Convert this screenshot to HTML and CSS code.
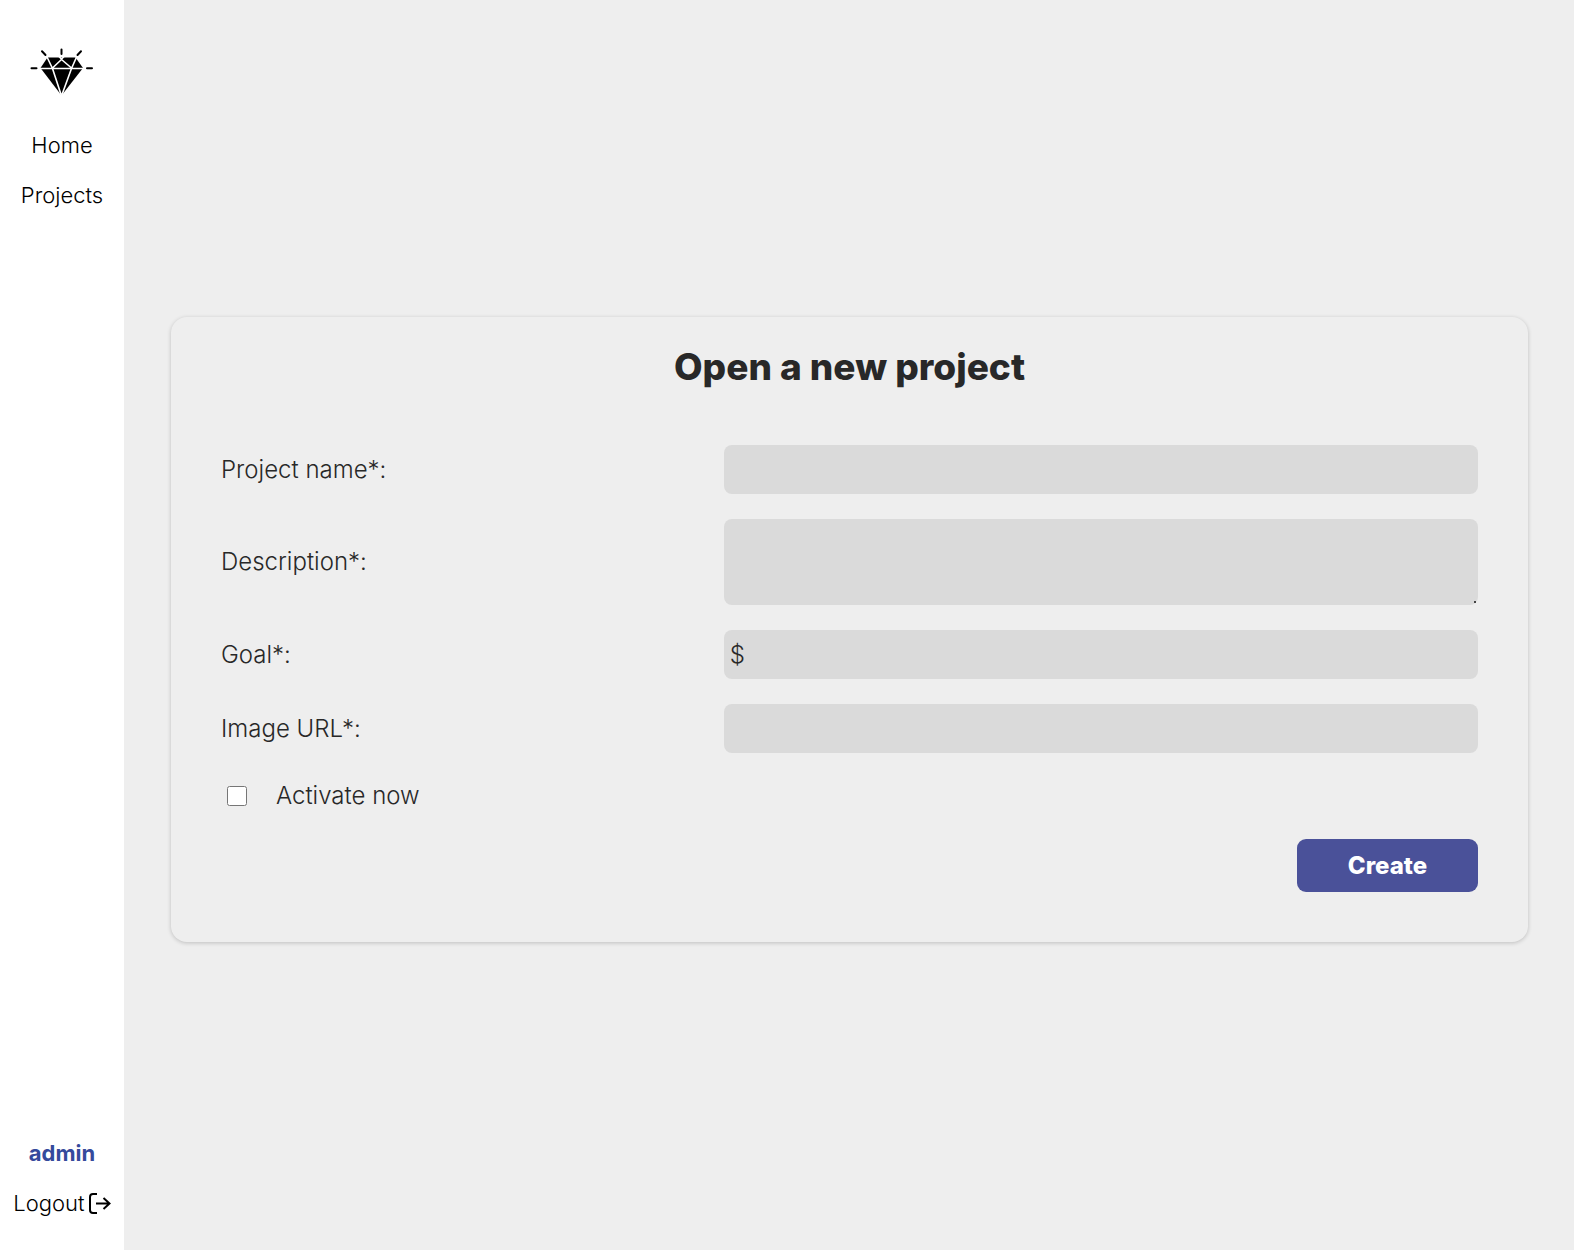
FILE: index.html
```html
<!DOCTYPE html>
<html lang="en">
<head>
  <meta charset="utf-8">
  <meta name="viewport" content="width=device-width, initial-scale=1">
  <title>Open a new project</title>
  <link rel="stylesheet" href="styles.css">
</head>
<body>
  <div class="layout">
    <nav class="sidebar">
      <a class="logo" href="#" aria-label="Start page">
        <svg width="64" height="48" viewBox="0 0 64 48" aria-hidden="true">
          <path d="M17.500 9.500H45.500L53 20L31.500 47.500L10.500 20Z" fill="#000"/>
          <path d="M9 20.500H55M16.500 8L22.500 20.500L31.500 48L41.500 20.500L47 8M22.500 20L31.500 11.500L41.500 20M29 8.500L31.500 11L34 8.500" fill="none" stroke="#fff" stroke-width="1.600"/>
          <path d="M1.500 20.300H6.500M57 20.300H62M31.500 1.500V6M12 3.200L15.500 7M51 3.200L47.500 7" fill="none" stroke="#000" stroke-width="2" stroke-linecap="round"/>
        </svg>
      </a>
      <a class="nav-link" href="#">Home</a>
      <a class="nav-link" href="#">Projects</a>
      <a class="nav-link account" href="#">admin</a>
      <a class="nav-link logout" href="#">
        Logout
        <svg width="22" height="22" viewBox="0 0 22 22" fill="none" stroke="#000" stroke-width="2" aria-hidden="true">
          <path d="M8 2H4Q1 2 1 5V18Q1 21 4 21H8M7 11.500H20M14.500 6L20.500 11.500L14.500 17"/>
        </svg>
      </a>
    </nav>
    <main class="content">
      <form class="card">
        <h1 class="title">Open a new project</h1>
        <div class="fields">
          <div class="row">
            <label for="name">Project name*:</label>
            <input class="field" id="name" type="text">
          </div>
          <div class="row">
            <label for="description">Description*:</label>
            <textarea class="field area" id="description"></textarea>
          </div>
          <div class="row">
            <label for="goal">Goal*:</label>
            <input class="field" id="goal" type="text" value="$">
          </div>
          <div class="row">
            <label for="image">Image URL*:</label>
            <input class="field" id="image" type="url">
          </div>
          <div class="check-row">
            <input class="check" id="activate" type="checkbox">
            <label for="activate">Activate now</label>
          </div>
          <button class="submit" type="button">Create</button>
        </div>
      </form>
    </main>
  </div>
</body>
</html>
```

FILE: styles.css
```css
* {
  box-sizing: border-box;
}

body {
  margin: 0;
  background: #eee;
  color: #282828;
  font-family: Inter, "Liberation Sans", sans-serif;
  font-size: 24px;
  font-weight: 300;
}

.layout {
  display: flex;
  min-height: 100vh;
}

.sidebar {
  display: flex;
  flex: 0 0 124px;
  flex-direction: column;
  align-items: center;
  gap: 20px;
  padding: 48px 0 32px;
  background: #fff;
}

.logo {
  display: block;
  height: 62px;
}

.nav-link {
  display: flex;
  align-items: center;
  gap: 4px;
  color: #000;
  font-size: 22px;
  line-height: 30px;
  text-decoration: none;
}

.account {
  margin-top: auto;
  color: #354a9c;
  font-weight: 700;
}

.content {
  display: flex;
  flex: 1;
  align-items: center;
  padding: 56px 46px 48px 47px;
}

.card {
  flex: 1;
  padding: 24px 50px 50px;
  border-radius: 16px;
  box-shadow: 0 1px 4px rgba(0, 0, 0, 0.2);
}

.title {
  margin: 0 0 52px;
  font-size: 37px;
  font-weight: 800;
  line-height: 52px;
  text-align: center;
}

.fields {
  display: flex;
  flex-direction: column;
  gap: 25px;
}

.row {
  display: grid;
  grid-template-columns: 2fr 3fr;
  align-items: center;
}

.field {
  width: 100%;
  height: 49px;
  padding: 6px;
  border: 0;
  border-radius: 8px;
  background: #dadada;
  color: inherit;
  font: inherit;
}

.area {
  display: block;
  height: 86px;
  resize: vertical;
}

.area::-webkit-resizer {
  background: linear-gradient(#444, #444) right 2px bottom 2px / 2px 2px no-repeat;
}

.check-row {
  display: flex;
  align-items: center;
  gap: 29px;
  height: 36px;
}

.check {
  width: 20px;
  height: 20px;
  margin: 0 0 0 6px;
}

.submit {
  align-self: flex-end;
  width: 181px;
  height: 53px;
  border: 0;
  border-radius: 9px;
  background: #4a5199;
  color: #fff;
  font: inherit;
  font-weight: 800;
}
```
